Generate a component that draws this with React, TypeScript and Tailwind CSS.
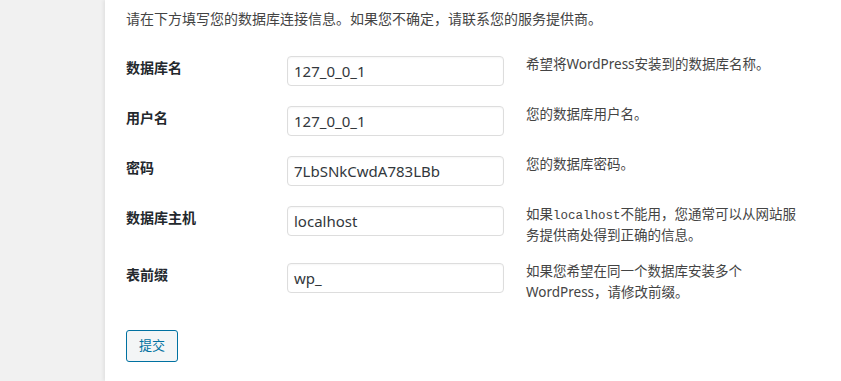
import React from "react";

const font = { fontFamily: '"Noto Sans", "Noto Sans CJK SC", sans-serif' };

type Row = { label: string; value: string; lines: React.ReactNode[] };

const mono = { fontFamily: '"Liberation Mono", "DejaVu Sans Mono", monospace' };

const rows: Row[] = [
  { label: "数据库名", value: "127_0_0_1", lines: ["希望将WordPress安装到的数据库名称。"] },
  { label: "用户名", value: "127_0_0_1", lines: ["您的数据库用户名。"] },
  { label: "密码", value: "7LbSNkCwdA783LBb", lines: ["您的数据库密码。"] },
  {
    label: "数据库主机",
    value: "localhost",
    lines: [
      <>
        如果
        <code className="text-[12.5px] leading-none" style={mono}>
          localhost
        </code>
        不能用，您通常可以从网站服
      </>,
      "务提供商处得到正确的信息。",
    ],
  },
  {
    label: "表前缀",
    value: "wp_",
    lines: ["如果您希望在同一个数据库安装多个", "WordPress，请修改前缀。"],
  },
];

export default function App() {
  return (
    <div className="flex w-[841px] h-[381px] overflow-hidden bg-[#f1f1f1]" style={font}>
      <div className="w-[105px] shrink-0 bg-[#f1f1f1]" />
      <div className="flex-1 bg-white pl-[21px] shadow-[-2px_0_3px_rgba(0,0,0,0.06)]">
        <p className="mt-[8px] text-[14px] leading-[21px] text-[#444]">
          请在下方填写您的数据库连接信息。如果您不确定，请联系您的服务提供商。
        </p>
        <div className="mt-[17px] flex flex-col">
          {rows.map((r) => (
            <div key={r.label} className="flex items-start">
              <div className="w-[161px] shrink-0 pt-[11px] text-[14px] leading-[21px] font-bold text-[#23282d]">
                {r.label}
              </div>
              <div className="py-[10px]">
                <div className="w-[217px] h-[30px] rounded-[4px] border border-[#dddddd] shadow-[inset_0_1px_2px_rgba(0,0,0,0.04)] pl-[6px] flex items-center text-[15px] text-[#32373c]">
                  {r.value}
                </div>
              </div>
              <div className="pl-[22px] pt-[8px] pb-[7px] text-[13.5px] text-[#444] whitespace-nowrap">
                {r.lines.map((l, i) => (
                  <div key={i} className="h-[21px] leading-[21px] overflow-visible">
                    {l}
                  </div>
                ))}
              </div>
            </div>
          ))}
        </div>
        <button className="mt-[20px] w-[52px] h-[32px] rounded-[3px] border border-[#0071a1] bg-[#f3f5f6] text-[13px] text-[#0071a1]">
          提交
        </button>
      </div>
    </div>
  );
}
